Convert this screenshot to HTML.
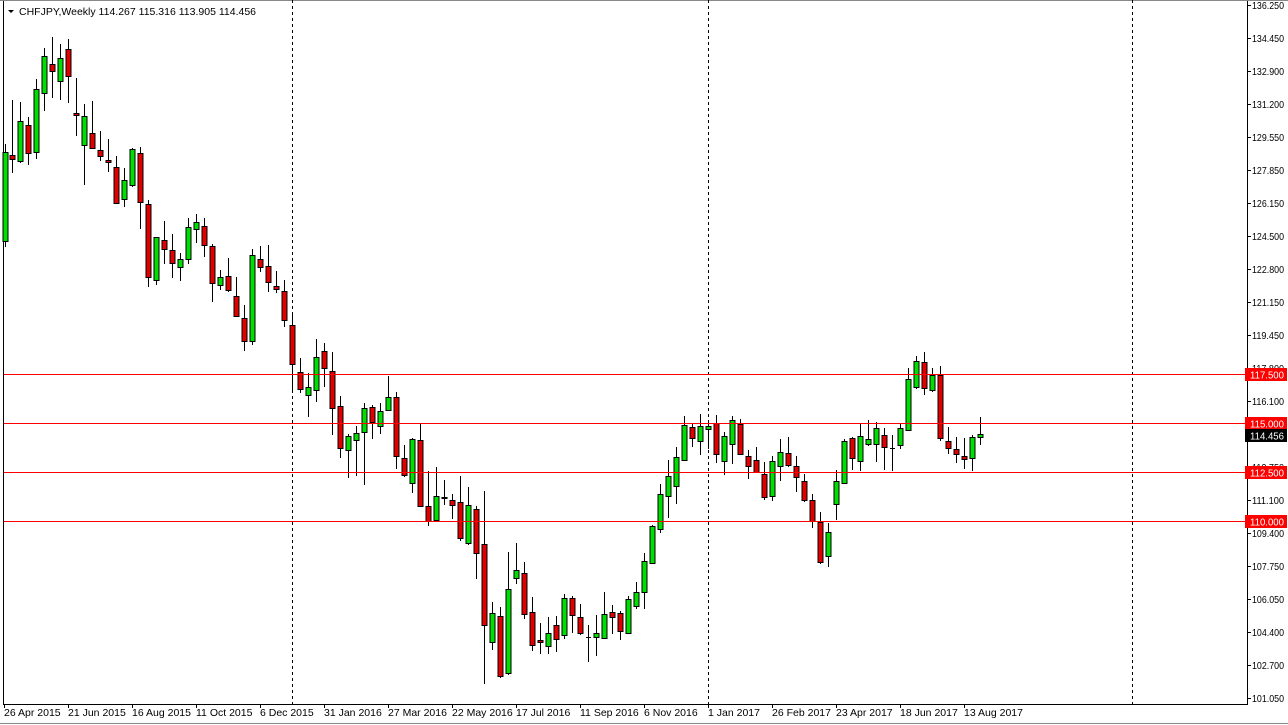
<!DOCTYPE html>
<html><head><meta charset="utf-8"><style>
html,body{margin:0;padding:0;background:#fff;}
svg{display:block;font-family:"Liberation Sans",sans-serif;}
</style></head><body>
<svg id="s" width="1288" height="725" xmlns="http://www.w3.org/2000/svg">
<rect x="0" y="0" width="1288" height="725" fill="#fff"/>
<line x1="3.5" y1="0" x2="3.5" y2="705" stroke="#000"/>
<line x1="3" y1="704.5" x2="1248" y2="704.5" stroke="#000"/>
<line x1="1247.5" y1="0" x2="1247.5" y2="705" stroke="#000"/>
<line x1="0" y1="0.5" x2="1288" y2="0.5" stroke="#888"/>
<line x1="0" y1="723.5" x2="1288" y2="723.5" stroke="#888"/>
<g stroke="#000" stroke-dasharray="3,3">
<line x1="292.5" y1="0" x2="292.5" y2="704"/>
<line x1="708.5" y1="0" x2="708.5" y2="704"/>
<line x1="1132.5" y1="0" x2="1132.5" y2="704"/>
</g>
<g id="c"></g>
<g stroke="#f00" stroke-width="1">
<line x1="4" y1="374.5" x2="1247" y2="374.5"/>
<line x1="4" y1="423.5" x2="1247" y2="423.5"/>
<line x1="4" y1="472.5" x2="1247" y2="472.5"/>
<line x1="4" y1="521.5" x2="1247" y2="521.5"/>
</g>
<g id="ax" font-size="10.5" fill="#000"></g>
<g font-size="10.5">
<rect x="1245" y="368" width="42" height="13" fill="#f00"/><text x="1250" y="378.5" fill="#fff" textLength="34" lengthAdjust="spacingAndGlyphs">117.500</text>
<rect x="1245" y="417" width="42" height="13" fill="#f00"/><text x="1250" y="427.5" fill="#fff" textLength="34" lengthAdjust="spacingAndGlyphs">115.000</text>
<rect x="1245" y="429" width="42" height="13" fill="#000"/><text x="1250" y="439.5" fill="#fff" textLength="34" lengthAdjust="spacingAndGlyphs">114.456</text>
<rect x="1245" y="466" width="42" height="13" fill="#f00"/><text x="1250" y="476.5" fill="#fff" textLength="34" lengthAdjust="spacingAndGlyphs">112.500</text>
<rect x="1245" y="515" width="42" height="13" fill="#f00"/><text x="1250" y="525.5" fill="#fff" textLength="34" lengthAdjust="spacingAndGlyphs">110.000</text>
</g>
<g font-size="10.5" fill="#000">
<path d="M8 10 L14 10 L11 13 Z" fill="#000"/>
<text x="19" y="15">CHFJPY,Weekly  114.267 115.316 113.905 114.456</text>
</g>
<g id="dt" font-size="10.5" fill="#000"></g>
</svg>
<script>
var NS="http://www.w3.org/2000/svg";
function el(p,t,a,tx){var e=document.createElementNS(NS,t);for(var k in a)e.setAttribute(k,a[k]);if(tx)e.textContent=tx;p.appendChild(e);return e;}
var d=[
[5,241,152,144,247],[12,155,159,100,173],[20,161,121,102,163],[28,125,153,117,165],[36,152,89,79,159],
[44,93,56,48,111],[52,64,71,37,98],[60,81,58,44,100],[68,49,76,39,103],[76,113,115,78,136],
[84,145,116,104,185],[92,133,148,101,149],[100,150,156,131,161],[108,160,162,139,172],[116,167,203,156,204],
[124,199,180,168,207],[132,185,149,148,187],[140,153,202,147,229],[148,204,277,200,287],[156,280,237,237,285],
[164,240,249,221,264],[172,250,263,234,278],[180,267,259,253,281],[188,259,227,218,264],[196,229,222,214,243],
[204,226,245,218,257],[212,246,283,244,302],[220,285,277,270,290],[228,276,290,258,292],[236,296,316,277,317],
[244,318,341,305,351],[252,341,255,249,345],[260,259,267,246,272],[268,266,282,245,292],[276,286,289,271,293],
[284,291,320,280,327],[292,325,364,315,390],[300,372,389,358,393],[308,395,387,373,417],[316,390,357,339,402],
[324,351,368,343,387],[332,371,408,352,435],[340,406,448,396,458],[348,450,436,434,478],[356,440,433,426,476],
[364,432,408,403,485],[372,407,422,405,439],[380,426,411,403,434],[388,410,397,376,410],[396,397,456,392,469],
[404,458,475,445,477],[412,483,439,438,493],[420,440,506,423,506],[428,506,521,471,526],[436,520,496,467,520],
[444,498,497,480,505],[452,500,505,494,519],[460,502,538,476,541],[468,543,505,487,545],[476,509,553,506,579],
[484,544,625,491,684],[492,642,613,602,650],[500,616,676,607,678],[508,673,589,552,675],[516,578,570,543,584],
[524,573,614,562,619],[532,612,645,597,651],[540,640,642,623,654],[548,646,633,617,654],[556,625,639,616,652],
[564,635,598,594,639],[572,598,615,596,633],[580,617,633,604,635],[588,637,637,625,662],[596,637,633,615,656],
[604,638,614,592,639],[612,612,617,605,634],[620,613,631,611,640],[628,633,599,596,633],[636,606,592,582,609],
[644,592,561,553,609],[652,563,526,525,563],[660,529,494,484,533],[668,496,476,460,518],[676,486,457,447,504],
[684,460,425,416,460],[692,427,438,424,447],[700,441,426,414,455],[708,429,426,424,449],[716,423,454,415,463],
[724,461,436,432,475],[732,444,420,416,464],[740,424,454,419,455],[748,456,466,450,479],[756,460,472,447,473],
[764,474,497,462,500],[772,496,461,456,501],[780,466,452,439,481],[788,453,465,437,467],[796,466,477,456,492],
[804,481,500,474,502],[812,500,521,494,528],[820,522,562,512,564],[828,556,532,523,567],[836,504,481,470,520],
[844,483,441,439,484],[852,438,458,437,470],[860,461,436,424,471],[868,444,439,420,446],[876,444,428,422,462],
[884,435,447,428,470],[892,448,448,435,471],[900,445,428,424,449],[908,430,379,368,431],[916,387,361,356,389],
[924,362,388,352,395],[932,390,375,368,392],[940,375,438,366,441],[948,441,448,427,454],[956,449,454,437,463],
[964,456,459,438,469],[972,458,437,435,471],[980,437,434,417,445]];
var g=document.getElementById("c");
d.forEach(function(c){
 var x=c[0]+0.5;
 el(g,"line",{x1:x,y1:c[3],x2:x,y2:c[4],stroke:"#000","stroke-width":1});
 var top=Math.min(c[1],c[2]),h=Math.abs(c[1]-c[2]);
 if(h<1){el(g,"line",{x1:x-2.5,y1:top+0.5,x2:x+2.5,y2:top+0.5,stroke:"#000"});return;}
 var col=c[2]<c[1]?"#00e000":"#e00000";
 el(g,"rect",{x:x-2.5,y:top+0.5,width:5,height:h,fill:col,stroke:"#000","stroke-width":1});
});
var ax=document.getElementById("ax");
var lab=["136.250","134.450","132.900","131.200","129.550","127.850","126.150","124.500","122.800","121.150","119.450","117.800","116.100","114.400","112.750","111.100","109.400","107.750","106.050","104.400","102.700","101.050"];
lab.forEach(function(t,i){var y=5+i*33;
 el(ax,"line",{x1:1247,y1:y+0.5,x2:1251,y2:y+0.5,stroke:"#000"});
 el(ax,"text",{x:1252,y:y+4,textLength:32,lengthAdjust:"spacingAndGlyphs"},t);});
var dt=document.getElementById("dt");
var ds=["26 Apr 2015","21 Jun 2015","16 Aug 2015","11 Oct 2015","6 Dec 2015","31 Jan 2016","27 Mar 2016","22 May 2016","17 Jul 2016","11 Sep 2016","6 Nov 2016","1 Jan 2017","26 Feb 2017","23 Apr 2017","18 Jun 2017","13 Aug 2017"];
ds.forEach(function(t,i){var x=4+i*64;
 el(dt,"line",{x1:x+0.5,y1:704,x2:x+0.5,y2:708,stroke:"#000"});
 el(dt,"text",{x:x,y:716},t);});
</script>
</body></html>
